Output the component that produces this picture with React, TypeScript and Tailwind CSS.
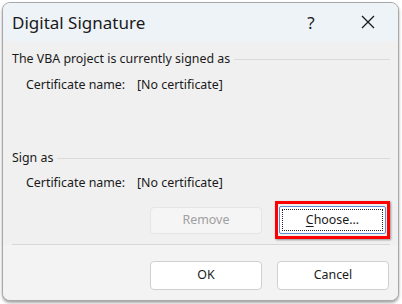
import React from "react";

export default function App() {
  const font = { fontFamily: '"Segoe UI", "Noto Sans", "Open Sans", sans-serif' };
  return (
    <div className="w-[402px] h-[304px] bg-white overflow-hidden" style={font}>
      <div className="ml-[2px] mt-[2px] w-[397px] h-[299px] rounded-[8px] border border-[#a8a8a8] bg-[#f0f0f0] overflow-hidden flex flex-col shadow-[0_2px_3px_rgba(0,0,0,0.35)]">
        {/* title bar */}
        <div className="h-[38px] bg-[#eef3f8] flex items-center shrink-0">
          <div className="pl-[9px] text-[17px] text-[#1a1a1a] leading-none flex-1 mt-[1px]">Digital Signature</div>
          <div className="w-[46px] flex justify-center text-[17px] text-[#1a1a1a] leading-none mr-[11px]">?</div>
          <div className="w-[46px] flex justify-center mr-[7px]">
            <svg width="14" height="14" viewBox="0 0 14 14">
              <path d="M1 1 L13 13 M13 1 L1 13" stroke="#1a1a1a" strokeWidth="1.3" fill="none" />
            </svg>
          </div>
        </div>
        <div className="flex flex-col text-[12.4px] text-[#1a1a1a] leading-none">
          <div className="flex items-center mt-[11px] h-[14px] pl-[9px] pr-[8px]">
            <span>The VBA project is currently signed as</span>
            <div className="flex-1 h-px bg-[#dadada] ml-[4px]" />
          </div>
          <div className="flex items-center mt-[12px] h-[14px] pl-[23px]">
            <span className="w-[111px]">Certificate name:</span>
            <span>[No certificate]</span>
          </div>
          <div className="flex items-center mt-[59px] h-[14px] pl-[9px] pr-[8px]">
            <span>Sign as</span>
            <div className="flex-1 h-px bg-[#dadada] ml-[4px]" />
          </div>
          <div className="flex items-center mt-[11px] h-[14px] pl-[23px]">
            <span className="w-[111px]">Certificate name:</span>
            <span>[No certificate]</span>
          </div>
          <div className="flex items-center mt-[11px] pl-[147px] gap-[13px] h-[38px]">
            <div className="w-[112px] h-[27px] rounded-[4px] border border-[#e5e5e5] bg-[#f5f5f5] flex items-center justify-center text-[#a0a0a0]">
              Remove
            </div>
            <div className="relative w-[115px] h-[38px] border-[3px] border-[#ff0000] shadow-[1px_1px_2px_rgba(0,0,0,0.4)] flex items-center justify-center">
              <div className="w-[107px] h-[28px] bg-white border border-[#5b8fd0] rounded-[2px] flex items-center justify-center p-[2px]">
                <div className="w-full h-full border border-dotted border-[#222] flex items-center justify-center">
                  <span><span className="underline underline-offset-2">C</span>hoose...</span>
                </div>
              </div>
            </div>
          </div>
          <div className="ml-[9px] mr-[8px] mt-[5px] h-px bg-[#d8d8d8]" />
        </div>
        <div className="flex-1 bg-[#f3f3f3] flex items-start pl-[147px] gap-[15px] pt-[16px] text-[12.4px] text-[#1a1a1a] leading-none">
          <div className="w-[112px] h-[29px] rounded-[4px] border border-[#d0d0d0] bg-white flex items-center justify-center">OK</div>
          <div className="w-[112px] h-[29px] rounded-[4px] border border-[#d0d0d0] bg-white flex items-center justify-center">Cancel</div>
        </div>
      </div>
    </div>
  );
}
